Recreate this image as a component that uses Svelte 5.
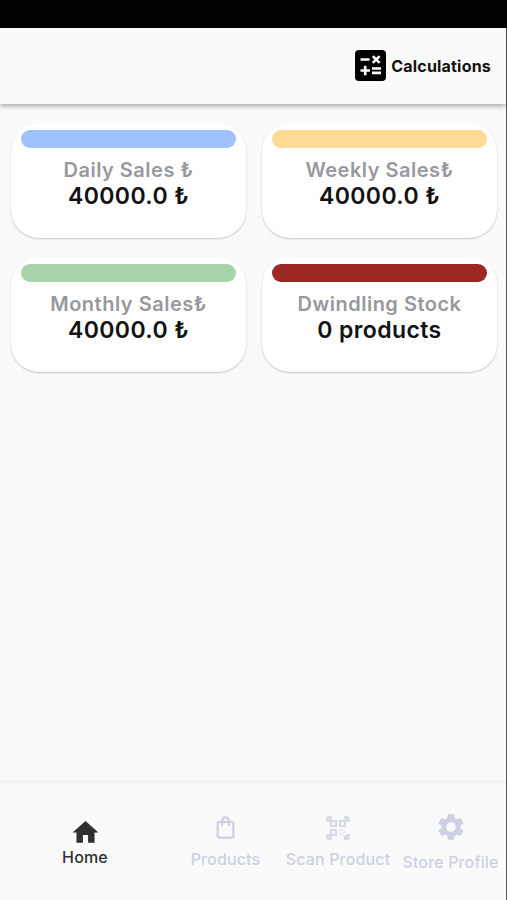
<script lang="ts">
	const cards = [
		{ title: 'Daily Sales ₺', value: '40000.0 ₺', tone: 'blue' },
		{ title: 'Weekly Sales₺', value: '40000.0 ₺', tone: 'yellow' },
		{ title: 'Monthly Sales₺', value: '40000.0 ₺', tone: 'green' },
		{ title: 'Dwindling Stock', value: '0 products', tone: 'red' }
	];

	const tabs = [
		{ id: 'home', label: 'Home' },
		{ id: 'products', label: 'Products' },
		{ id: 'scan', label: 'Scan Product' },
		{ id: 'store', label: 'Store Profile' }
	];

	let active = $state('home');
</script>

<div class="phone">
	<div class="status-bar"></div>

	<div class="screen">
		<header>
			<button class="calc">
				<svg width="31" height="31" viewBox="0 0 31 31">
					<rect width="31" height="31" rx="4" fill="#000" />
					<g stroke="#fff" stroke-width="2.6" fill="none">
						<path d="M5.5 9.5h9M17.8 6.1l6.8 6.8M24.6 6.1l-6.8 6.8M5.5 20.5h9.4M10.2 15.8v9.4M17 18.5h9M17 22.9h9" />
					</g>
				</svg>
				<span>Calculations</span>
			</button>
		</header>

		<main>
			{#each cards as card}
				<section class="card">
					<div class="strip {card.tone}"></div>
					<h2>{card.title}</h2>
					<p>{card.value}</p>
				</section>
			{/each}
		</main>

		<nav>
			{#each tabs as tab}
				<button class="tab {tab.id}" class:active={active === tab.id} onclick={() => (active = tab.id)}>
					{#if tab.id === 'home'}
						<svg width="31" height="31" viewBox="0 0 24 24">
							<path fill="currentColor" d="M10 20v-6h4v6h5v-8h3L12 3 2 12h3v8z" />
						</svg>
					{:else if tab.id === 'products'}
						<svg width="27" height="27" viewBox="0 0 24 24">
							<path
								fill="currentColor"
								d="M18 6h-2c0-2.21-1.79-4-4-4S8 3.79 8 6H6c-1.1 0-2 .9-2 2v12c0 1.1.9 2 2 2h12c1.1 0 2-.9 2-2V8c0-1.1-.9-2-2-2zm-6-2c1.1 0 2 .9 2 2h-4c0-1.1.9-2 2-2zm6 16H6V8h2v2c0 .55.45 1 1 1s1-.45 1-1V8h4v2c0 .55.45 1 1 1s1-.45 1-1V8h2v12z"
							/>
						</svg>
					{:else if tab.id === 'scan'}
						<svg width="26" height="26" viewBox="0 0 26 26" fill="none" stroke="currentColor">
							<path
								fill="currentColor"
								stroke="none"
								opacity=".75"
								d="M1 3l2-2h4v3L4 7H1zM25 3l-2-2h-4v3l3 3h3zM1 23l2 2h4v-3l-3-3H1zM25 23l-2 2h-4v-3l3-3h3z"
							/>
							<path stroke-width="2" opacity=".85" d="M6 6h5v5H6zM15 6h5v5h-5zM6 15h5v5H6z" />
							<path stroke-width="2" opacity=".45" d="M14 15h3.5M17.5 17H21M14 19h3.500M17.500 21h3" />
						</svg>
					{:else}
						<svg width="32" height="32" viewBox="0 0 24 24">
							<path
								fill="currentColor"
								d="M19.14 12.94c.04-.3.06-.61.06-.94 0-.32-.02-.64-.07-.94l2.03-1.58c.18-.14.23-.41.12-.61l-1.92-3.32c-.12-.22-.37-.29-.59-.22l-2.39.96c-.5-.38-1.03-.7-1.62-.94l-.36-2.54c-.04-.24-.24-.41-.48-.41h-3.84c-.24 0-.43.17-.47.41l-.36 2.54c-.59.24-1.13.57-1.62.94l-2.39-.96c-.22-.08-.47 0-.59.22L2.74 8.87c-.12.21-.08.47.12.61l2.03 1.58c-.05.3-.09.63-.09.94s.02.64.07.94l-2.03 1.58c-.18.14-.23.41-.12.61l1.92 3.32c.12.22.37.29.59.22l2.39-.96c.5.38 1.03.7 1.62.94l.36 2.54c.05.24.24.41.48.41h3.84c.24 0 .44-.17.47-.41l.36-2.54c.59-.24 1.13-.56 1.62-.94l2.39.96c.22.08.47 0 .59-.22l1.92-3.32c.12-.22.07-.47-.12-.61l-2.01-1.58zM12 15.6c-1.98 0-3.6-1.62-3.6-3.6s1.62-3.6 3.6-3.6 3.6 1.62 3.6 3.6-1.62 3.6-3.6 3.6z"
							/>
						</svg>
					{/if}
					<span>{tab.label}</span>
				</button>
			{/each}
		</nav>
	</div>
</div>

<style>
	:global(body) {
		margin: 0;
	}

	.phone {
		display: flex;
		flex-direction: column;
		height: 900px;
		overflow: hidden;
		font-family: Inter, 'Liberation Sans', sans-serif;
		background-color: #fafafa;
	}

	button {
		padding: 0;
		border: none;
		background: none;
		font-family: inherit;
		cursor: pointer;
	}

	svg {
		display: block;
		flex: none;
	}

	.status-bar {
		height: 28px;
		background-color: #000;
	}

	.screen {
		flex: 1;
		display: flex;
		flex-direction: column;
		border-right: 1px solid #555;
	}

	header {
		display: flex;
		align-items: center;
		justify-content: flex-end;
		height: 76px;
		padding: 0 15px 1px 0;
		box-sizing: border-box;
		background-color: #fafafa;
		box-shadow: 0 2px 5px rgba(0, 0, 0, 0.35);
	}

	.calc {
		display: flex;
		align-items: center;
		gap: 5px;
		color: #111;
		font-size: 16px;
		font-weight: 700;
		letter-spacing: 0.2px;
	}

	main {
		flex: 1;
		display: grid;
		grid-template-columns: 235px 235px;
		grid-auto-rows: 115px;
		align-content: start;
		gap: 19px 16px;
		padding: 19px 0 0 11px;
	}

	.card {
		box-sizing: border-box;
		padding: 7px 10px 0;
		border-radius: 28px;
		background-color: #fff;
		box-shadow: 0 1px 2px rgba(0, 0, 0, 0.22);
		text-align: center;
		white-space: nowrap;
	}

	.strip {
		height: 18px;
		border-radius: 9px;
	}

	.blue {
		background-color: #9fc2ff;
	}

	.yellow {
		background-color: #ffda95;
	}

	.green {
		background-color: #a7d4aa;
	}

	.red {
		background-color: #9c2823;
	}

	h2 {
		margin: 10px 0 0;
		color: #98989d;
		font-size: 20px;
		line-height: 25px;
		font-weight: 600;
		letter-spacing: 0.5px;
	}

	p {
		margin: 0;
		color: #121214;
		font-size: 23px;
		line-height: 27px;
		font-weight: 600;
		letter-spacing: 0.4px;
	}

	nav {
		display: grid;
		grid-template-columns: 170px 111px 114px 111px;
		height: 120px;
		box-sizing: border-box;
		border-top: 4px solid #f6f6f7;
	}

	.tab {
		display: flex;
		flex-direction: column;
		align-items: center;
		justify-content: flex-start;
		color: #cdd0e2;
		font-size: 16px;
		line-height: 20px;
		font-weight: 500;
		letter-spacing: 0.15px;
		white-space: nowrap;
	}

	.tab.active {
		color: #303030;
	}

	.home {
		padding-top: 33px;
	}

	.home span {
		margin-top: -1px;
	}

	.products {
		padding-top: 30px;
	}

	.products span,
	.scan span {
		margin-top: 8px;
	}

	.scan {
		padding-top: 31px;
	}

	.store {
		padding-top: 27px;
	}

	.store span {
		margin-top: 9px;
	}
</style>
